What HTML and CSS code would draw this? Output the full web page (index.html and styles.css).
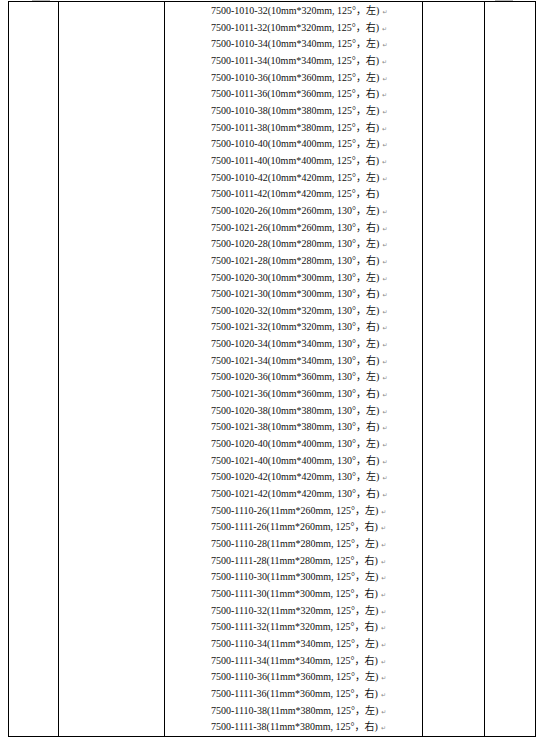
FILE: index.html
```html
<!DOCTYPE html>
<html lang="zh">
<head>
<meta charset="utf-8">
<link rel="stylesheet" href="styles.css">
</head>
<body>
<div class="marks"><span class="mark m1"></span><span class="mark m2"></span></div>
<div class="table">
  <div class="cell"></div>
  <div class="cell"></div>
  <div class="cell list">
    <p>7500-1010-32(10mm*320mm, 125°，左)<span class="pm">↵</span></p>
    <p>7500-1011-32(10mm*320mm, 125°，右)<span class="pm">↵</span></p>
    <p>7500-1010-34(10mm*340mm, 125°，左)<span class="pm">↵</span></p>
    <p>7500-1011-34(10mm*340mm, 125°，右)<span class="pm">↵</span></p>
    <p>7500-1010-36(10mm*360mm, 125°，左)<span class="pm">↵</span></p>
    <p>7500-1011-36(10mm*360mm, 125°，右)<span class="pm">↵</span></p>
    <p>7500-1010-38(10mm*380mm, 125°，左)<span class="pm">↵</span></p>
    <p>7500-1011-38(10mm*380mm, 125°，右)<span class="pm">↵</span></p>
    <p>7500-1010-40(10mm*400mm, 125°，左)<span class="pm">↵</span></p>
    <p>7500-1011-40(10mm*400mm, 125°，右)<span class="pm">↵</span></p>
    <p>7500-1010-42(10mm*420mm, 125°，左)<span class="pm">↵</span></p>
    <p>7500-1011-42(10mm*420mm, 125°，右)</p>
    <p>7500-1020-26(10mm*260mm, 130°，左)<span class="pm">↵</span></p>
    <p>7500-1021-26(10mm*260mm, 130°，右)<span class="pm">↵</span></p>
    <p>7500-1020-28(10mm*280mm, 130°，左)<span class="pm">↵</span></p>
    <p>7500-1021-28(10mm*280mm, 130°，右)<span class="pm">↵</span></p>
    <p>7500-1020-30(10mm*300mm, 130°，左)<span class="pm">↵</span></p>
    <p>7500-1021-30(10mm*300mm, 130°，右)<span class="pm">↵</span></p>
    <p>7500-1020-32(10mm*320mm, 130°，左)<span class="pm">↵</span></p>
    <p>7500-1021-32(10mm*320mm, 130°，右)<span class="pm">↵</span></p>
    <p>7500-1020-34(10mm*340mm, 130°，左)<span class="pm">↵</span></p>
    <p>7500-1021-34(10mm*340mm, 130°，右)<span class="pm">↵</span></p>
    <p>7500-1020-36(10mm*360mm, 130°，左)<span class="pm">↵</span></p>
    <p>7500-1021-36(10mm*360mm, 130°，右)<span class="pm">↵</span></p>
    <p>7500-1020-38(10mm*380mm, 130°，左)<span class="pm">↵</span></p>
    <p>7500-1021-38(10mm*380mm, 130°，右)<span class="pm">↵</span></p>
    <p>7500-1020-40(10mm*400mm, 130°，左)<span class="pm">↵</span></p>
    <p>7500-1021-40(10mm*400mm, 130°，右)<span class="pm">↵</span></p>
    <p>7500-1020-42(10mm*420mm, 130°，左)<span class="pm">↵</span></p>
    <p>7500-1021-42(10mm*420mm, 130°，右)<span class="pm">↵</span></p>
    <p>7500-1110-26(11mm*260mm, 125°，左)<span class="pm">↵</span></p>
    <p>7500-1111-26(11mm*260mm, 125°，右)<span class="pm">↵</span></p>
    <p>7500-1110-28(11mm*280mm, 125°，左)<span class="pm">↵</span></p>
    <p>7500-1111-28(11mm*280mm, 125°，右)<span class="pm">↵</span></p>
    <p>7500-1110-30(11mm*300mm, 125°，左)<span class="pm">↵</span></p>
    <p>7500-1111-30(11mm*300mm, 125°，右)<span class="pm">↵</span></p>
    <p>7500-1110-32(11mm*320mm, 125°，左)<span class="pm">↵</span></p>
    <p>7500-1111-32(11mm*320mm, 125°，右)<span class="pm">↵</span></p>
    <p>7500-1110-34(11mm*340mm, 125°，左)<span class="pm">↵</span></p>
    <p>7500-1111-34(11mm*340mm, 125°，右)<span class="pm">↵</span></p>
    <p>7500-1110-36(11mm*360mm, 125°，左)<span class="pm">↵</span></p>
    <p>7500-1111-36(11mm*360mm, 125°，右)<span class="pm">↵</span></p>
    <p>7500-1110-38(11mm*380mm, 125°，左)<span class="pm">↵</span></p>
    <p>7500-1111-38(11mm*380mm, 125°，右)<span class="pm">↵</span></p>
  </div>
  <div class="cell"></div>
  <div class="cell last"></div>
</div>
</body>
</html>
```

FILE: styles.css
```css
html, body {
  margin: 0;
  padding: 0;
  background: #fff;
}

body {
  font-family: "Liberation Serif", "Noto Sans CJK SC", serif;
  color: #111;
}

.marks {
  display: flex;
  height: 1px;
  padding-left: 32px;
}

.mark {
  display: block;
  height: 1px;
  width: 18px;
  background: #b8b8b8;
}

.m2 {
  margin-left: 445px;
}

.table {
  margin-left: 8px;
  display: grid;
  grid-template-columns: 50px 106px 258px 62px 52px;
  width: 528px;
  border-top: 1px solid #000;
  border-bottom: 1px solid #000;
}

.cell {
  box-sizing: border-box;
  border-left: 1px solid #000;
}

.cell.last {
  border-right: 1px solid #000;
}

.list {
  padding: 1px 0 0 46px;
}

.list p {
  margin: 0;
  height: 16.67px;
  line-height: 16.67px;
  font-size: 10px;
  white-space: nowrap;
}

.pm {
  font-family: "DejaVu Sans", sans-serif;
  font-size: 6px;
  color: #888;
  margin-left: 3px;
}
```
